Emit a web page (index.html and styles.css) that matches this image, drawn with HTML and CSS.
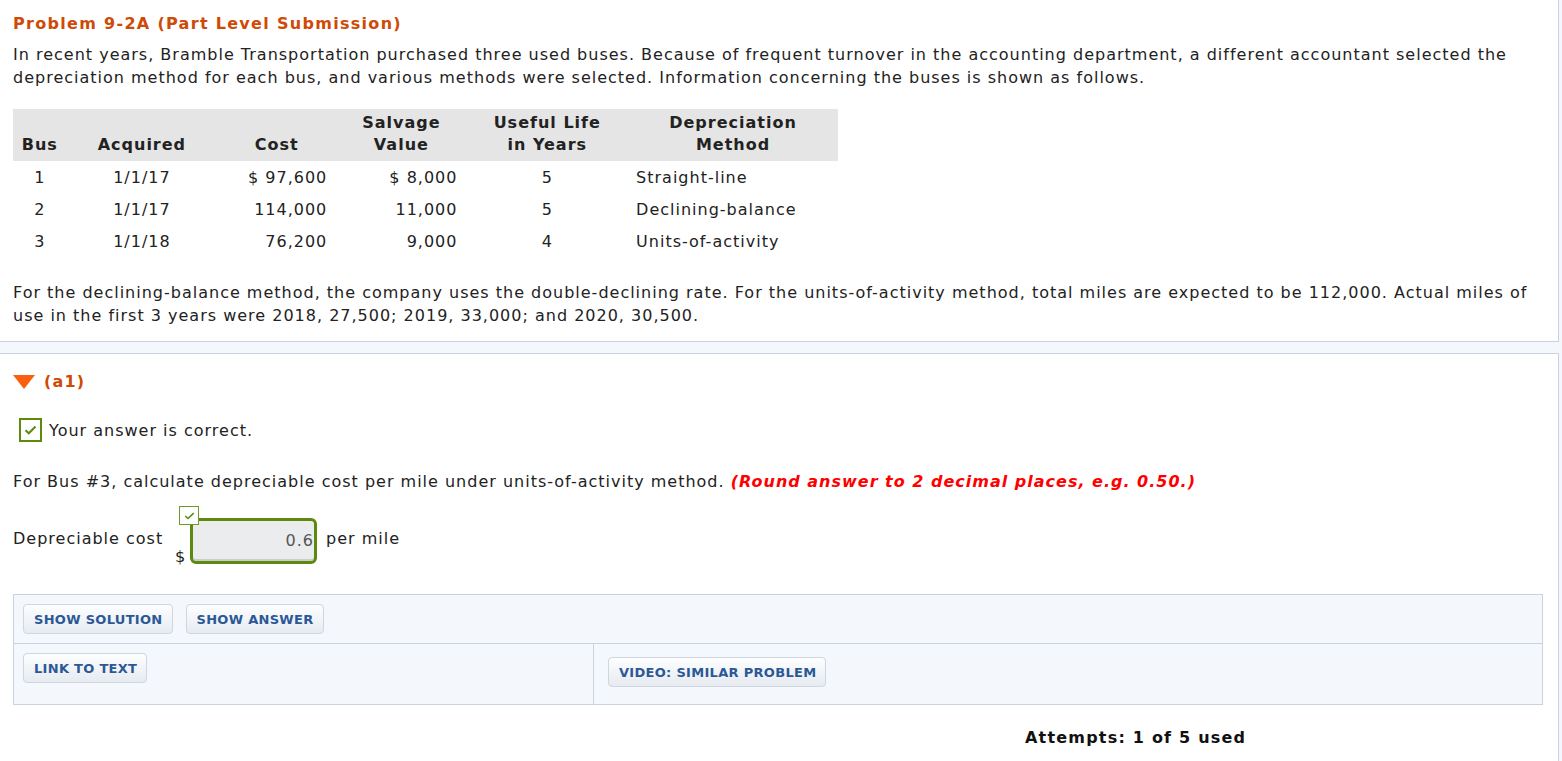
FILE: index.html
```html
<!DOCTYPE html>
<html>
<head>
  <title>Problem 9-2A</title>
  <link rel="stylesheet" href="styles.css">
</head>
<body>
  <div class="page">
    <div class="box intro">
      <h2 class="title">Problem 9-2A (Part Level Submission)</h2>
      <p class="text">In recent years, Bramble Transportation purchased three used buses. Because of frequent turnover in the accounting department, a different accountant selected the depreciation method for each bus, and various methods were selected. Information concerning the buses is shown as follows.</p>

      <table class="buses">
        <thead>
          <tr>
            <th class="c-bus">Bus</th>
            <th class="c-acq">Acquired</th>
            <th class="c-cost">Cost</th>
            <th class="c-salv">Salvage<br>Value</th>
            <th class="c-life">Useful Life<br>in Years</th>
            <th class="c-meth">Depreciation<br>Method</th>
          </tr>
        </thead>
        <tbody>
          <tr>
            <td class="c-bus">1</td>
            <td class="c-acq">1/1/17</td>
            <td class="c-cost num">$ 97,600</td>
            <td class="c-salv num">$ 8,000</td>
            <td class="c-life">5</td>
            <td class="c-meth left">Straight-line</td>
          </tr>
          <tr>
            <td class="c-bus">2</td>
            <td class="c-acq">1/1/17</td>
            <td class="c-cost num">114,000</td>
            <td class="c-salv num">11,000</td>
            <td class="c-life">5</td>
            <td class="c-meth left">Declining-balance</td>
          </tr>
          <tr>
            <td class="c-bus">3</td>
            <td class="c-acq">1/1/18</td>
            <td class="c-cost num">76,200</td>
            <td class="c-salv num">9,000</td>
            <td class="c-life">4</td>
            <td class="c-meth left">Units-of-activity</td>
          </tr>
        </tbody>
      </table>

      <p class="text after-table">For the declining-balance method, the company uses the double-declining rate. For the units-of-activity method, total miles are expected to be 112,000. Actual miles of use in the first 3 years were 2018, 27,500; 2019, 33,000; and 2020, 30,500.</p>
    </div>

    <div class="box part">
      <div class="part-head">
        <span class="toggle"></span>
        <span class="part-name">(a1)</span>
      </div>

      <div class="status">
        <span class="check big">
          <svg width="13" height="10" viewBox="0 0 13 10"><path d="M1.5 5.2 L4.8 8.3 L11.5 1.5" fill="none" stroke="#5b8a0f" stroke-width="2"/></svg>
        </span>
        <span>Your answer is correct.</span>
      </div>

      <p class="question">For Bus #3, calculate depreciable cost per mile under units-of-activity method. <em class="hint">(Round answer to 2 decimal places, e.g. 0.50.)</em></p>

      <div class="answer-row">
        <span class="label">Depreciable cost</span>
        <span class="field">
          <span class="check small">
            <svg width="11" height="8" viewBox="0 0 11 8"><path d="M1.3 4 L4 6.5 L9.7 1.2" fill="none" stroke="#5b8a0f" stroke-width="1.6"/></svg>
          </span>
          <span class="dollar">$</span>
          <span class="input">0.6</span>
        </span>
        <span class="unit">per mile</span>
      </div>

      <div class="tools">
        <div class="tools-row">
          <button class="btn">SHOW SOLUTION</button>
          <button class="btn">SHOW ANSWER</button>
        </div>
        <div class="tools-row split">
          <div class="cell">
            <button class="btn">LINK TO TEXT</button>
          </div>
          <div class="cell right">
            <button class="btn">VIDEO: SIMILAR PROBLEM</button>
          </div>
        </div>
      </div>

      <div class="attempts">Attempts: 1 of 5 used</div>
    </div>
  </div>
</body>
</html>
```

FILE: styles.css
```css
/* page */
body {
  margin: 0;
  padding: 0;
  background-color: #f4f7fb;
  font-family: "DejaVu Sans", Verdana, sans-serif;
  font-size: 16px;
  line-height: 23px;
  letter-spacing: 1px;
  color: #222;
  overflow: hidden;
}

.page {
  padding-right: 3px;
}

.box {
  background-color: #fff;
  border: 1px solid #c9d3df;
  border-left: 0;
}

.intro {
  border-top: 0;
  padding: 12px 14px 14px 13px;
}

.part {
  margin-top: 11px;
  border-bottom: 0;
  padding: 16px 15px 30px 13px;
}

.title {
  margin: 0;
  font-size: 16px;
  line-height: 23px;
  letter-spacing: 1.3px;
  color: #cf4a06;
}

.text {
  margin: 8px 0 0 0;
}

.after-table {
  margin-top: 24px;
}

/* table of buses */
.buses {
  margin-top: 20px;
  border-collapse: collapse;
  width: 825px;
}

.buses th {
  background-color: #e5e5e5;
  font-weight: bold;
  vertical-align: bottom;
  line-height: 22px;
  padding: 3px 0 5px 0;
  text-align: center;
}

.buses td {
  height: 32px;
  padding: 0;
  text-align: center;
  vertical-align: middle;
}

.c-bus { width: 55px; }
.c-acq { width: 155px; }
.c-cost { width: 113px; }
.c-salv { width: 125px; }
.c-life { width: 169px; }
.c-meth { width: 208px; }

.buses td.num {
  text-align: right;
  padding-right: 9px;
}

.buses td.left {
  text-align: left;
  padding-left: 8px;
}

/* part a1 */
.part-head {
  display: flex;
  align-items: center;
  gap: 9px;
}

.toggle {
  width: 0;
  height: 0;
  border-left: 11px solid transparent;
  border-right: 11px solid transparent;
  border-top: 14px solid #fa5f0f;
}

.part-name {
  font-weight: bold;
  letter-spacing: 1.2px;
  color: #cf4a06;
}

.status {
  display: flex;
  align-items: center;
  gap: 7px;
  margin-top: 25px;
  padding-left: 6px;
}

.check {
  display: flex;
  align-items: center;
  justify-content: center;
  box-sizing: border-box;
  background-color: #fff;
}

.check.big {
  width: 23px;
  height: 24px;
  border: 2px solid #5b8a0f;
}

.check.small {
  width: 20px;
  height: 19px;
  border: 1.5px solid #6e9a2a;
}

.question {
  margin: 28px 0 0 0;
}

.hint {
  color: #f00;
  font-weight: bold;
}

.answer-row {
  display: flex;
  align-items: center;
  margin-top: 25px;
}

.label {
  width: 165px;
  margin-bottom: 5px;
}

.field {
  position: relative;
  padding: 12px 0 0 12px;
  margin-top: -12px;
}

.field .check.small {
  position: absolute;
  left: 1px;
  top: 0;
  z-index: 1;
}

.dollar {
  position: absolute;
  left: -3px;
  bottom: -4px;
}

.input {
  display: block;
  box-sizing: border-box;
  width: 127px;
  height: 46px;
  border: 3px solid #5b8a0f;
  border-radius: 6px;
  background-color: #ebecee;
  box-shadow: inset 0 -2px 0 #c9cbce;
  color: #555;
  text-align: right;
  padding: 8px 0 0 0;
}

.unit {
  margin-left: 9px;
  margin-bottom: 5px;
}

/* tool buttons */
.tools {
  margin-top: 30px;
  border: 1px solid #c9d3df;
  background-color: #f4f7fb;
}

.tools-row {
  display: flex;
  gap: 13px;
  padding: 9px;
  height: 30px;
}

.tools-row.split {
  border-top: 1px solid #c9d3df;
  padding: 0;
  height: 60px;
  gap: 0;
}

.cell {
  box-sizing: border-box;
  width: 580px;
  padding: 9px 0 0 9px;
  border-right: 1px solid #c9d3df;
}

.cell.right {
  flex: 1;
  border-right: 0;
  padding: 13px 0 0 14px;
}

.btn {
  font-family: "DejaVu Sans", Verdana, sans-serif;
  font-size: 13px;
  font-weight: bold;
  letter-spacing: 0.3px;
  color: #2c5896;
  height: 30px;
  padding: 0 9px 0 10px;
  border: 1px solid #cfd6df;
  border-radius: 4px;
  background: linear-gradient(#fdfeff, #e6ebf1);
  cursor: pointer;
}

.btn:hover {
  background: #e6ebf1;
}

.attempts {
  margin-top: 21px;
  padding-left: 1012px;
  font-weight: bold;
  font-size: 16px;
  letter-spacing: 1.2px;
  color: #111;
}
```
